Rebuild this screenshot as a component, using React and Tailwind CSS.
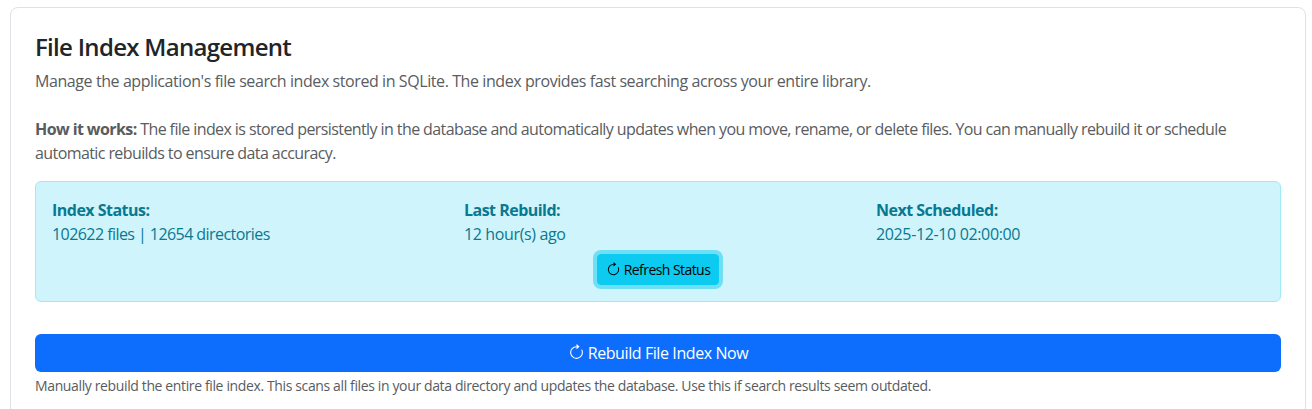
function StatusColumn({ label, value, valueClass }) {
  return (
    <div>
      <div className="font-bold tracking-[-0.52px]">{label}</div>
      <div className={valueClass}>{value}</div>
    </div>
  );
}

function RefreshIcon({ className }) {
  return (
    <svg viewBox="0 0 16 16" fill="currentColor" className={className}>
      <path fillRule="evenodd" d="M8 3a5 5 0 1 0 4.546 2.914.5.5 0 0 1 .908-.417A6 6 0 1 1 8 2v1z" />
      <path d="M8 4.466V.534a.25.25 0 0 1 .41-.192l2.36 1.966c.12.1.12.284 0 .384L8.41 4.658A.25.25 0 0 1 8 4.466z" />
    </svg>
  );
}

export default function App() {
  return (
    <div className="h-[409px] overflow-hidden bg-white pt-[7px] pr-1.5 pl-2.5 font-['Open_Sans',sans-serif] text-base leading-6 text-[#212529]">
      <div className="rounded-lg border border-[#dee2e6] p-6">
        <h4 className="mb-[7px] pt-px text-2xl leading-[1.2] font-semibold tracking-[-0.7px]">File Index Management</h4>
        <p className="mb-4 text-[#595c5f]">
          <span className="tracking-[-0.416px]">
            Manage the application's file search index stored in SQLite. The index provides fast searching across your entire library.
          </span>
          <br />
          <br />
          <span className="tracking-[-0.59px]">
            <strong className="font-bold">How it works:</strong> The file index is stored persistently in the database and automatically updates when you move, rename, or delete files. You can manually rebuild it or schedule automatic rebuilds to ensure data accuracy.
          </span>
        </p>

        <div className="mb-8 rounded-md border border-[#9eeaf9] bg-[#cff4fc] p-4 text-[#087990]">
          <div className="mr-[-24px] grid grid-cols-3">
            <StatusColumn label="Index Status:" value="102622 files | 12654 directories" valueClass="tracking-[-0.56px]" />
            <StatusColumn label="Last Rebuild:" value="12 hour(s) ago" valueClass="tracking-[-0.36px]" />
            <StatusColumn label="Next Scheduled:" value="2025-12-10 02:00:00" valueClass="tracking-[-0.36px]" />
          </div>
          <div className="mt-2 flex justify-center">
            <button className="flex items-center gap-[3px] rounded border border-[#0dcaf0] bg-[#0dcaf0] px-2 py-1 text-sm leading-[21px] tracking-[-0.56px] text-black shadow-[0_0_0_4px_#6fdff5]">
              <RefreshIcon className="h-[15px] w-[15px]" />
              Refresh Status
            </button>
          </div>
        </div>

        <button className="flex h-[38px] w-full items-center justify-center gap-[3px] rounded-md bg-[#0d6efd] tracking-[-0.41px] text-white">
          <RefreshIcon className="h-[17px] w-[17px]" />
          Rebuild File Index Now
        </button>
        <div className="mt-[3px] text-sm leading-[21px] tracking-[-0.37px] text-[#595c5f]">
          Manually rebuild the entire file index. This scans all files in your data directory and updates the database. Use this if search results seem outdated.
        </div>
      </div>
    </div>
  );
}
